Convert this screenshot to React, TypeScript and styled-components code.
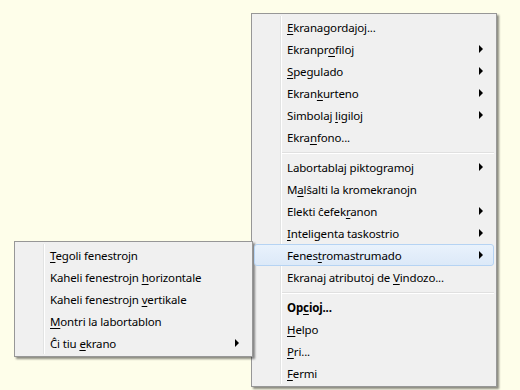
import styled, { createGlobalStyle } from 'styled-components';

const GlobalStyle = createGlobalStyle`
  html, body {
    margin: 0;
    padding: 0;
    background: #fefeea;
  }
  body {
    width: 520px;
    height: 390px;
    overflow: hidden;
    font-family: "Noto Sans", "Open Sans", sans-serif;
  }
`;

const Desktop = styled.div`
  position: relative;
  width: 520px;
  height: 390px;
  background: #fefeea;
`;

const Menu = styled.div<{ $left: number; $top: number; $width: number }>`
  position: absolute;
  left: ${({ $left }) => $left}px;
  top: ${({ $top }) => $top}px;
  width: ${({ $width }) => $width}px;
  box-sizing: border-box;
  padding: 2px;
  background: #f0f0f0;
  border: 1px solid #979797;
  box-shadow: 2px 2px 2px rgba(0, 0, 0, 0.45);
  display: flex;
  flex-direction: column;

  /* gutter line next to the icon column */
  &::before {
    content: "";
    position: absolute;
    top: 2px;
    bottom: 2px;
    left: 28px;
    width: 1px;
    background: #e2e3e3;
    box-shadow: 1px 0 0 #ffffff;
  }
`;

const Item = styled.div<{ $active?: boolean; $bold?: boolean }>`
  position: relative;
  height: 22px;
  box-sizing: border-box;
  display: flex;
  align-items: center;
  padding-left: 32px;
  padding-right: 10px;
  font-size: 11.5px;
  letter-spacing: -0.15px;
  color: #000;
  font-weight: ${({ $bold }) => ($bold ? 700 : 400)};
  white-space: nowrap;
  border: 1px solid ${({ $active }) => ($active ? '#b5d3f3' : 'transparent')};
  border-radius: 3px;
  background: ${({ $active }) =>
    $active ? 'linear-gradient(#e9f2fc, #dce9f8)' : 'transparent'};
  z-index: 1;

  u {
    text-decoration: underline;
    text-underline-offset: 2px;
  }
`;

const Label = styled.span`
  flex: 1;
`;

const Arrow = styled.span`
  width: 0;
  height: 0;
  border-top: 4px solid transparent;
  border-bottom: 4px solid transparent;
  border-left: 4px solid #000;
`;

const Separator = styled.div`
  height: 8px;
  display: flex;
  align-items: center;
  padding-left: 28px;
  z-index: 1;

  &::after {
    content: "";
    flex: 1;
    height: 1px;
    background: #e0e0e0;
    box-shadow: 0 1px 0 #ffffff;
  }
`;

type Entry = { label: React.ReactNode; sub?: boolean; active?: boolean; bold?: boolean } | 'sep';

const mainEntries: Entry[] = [
  { label: <><u>E</u>kranagordajoj...</> },
  { label: <>Ekranpr<u>o</u>filoj</>, sub: true },
  { label: <><u>S</u>pegulado</>, sub: true },
  { label: <>Ekran<u>k</u>urteno</>, sub: true },
  { label: <>Simbolaj <u>l</u>igiloj</>, sub: true },
  { label: <>Ekra<u>n</u>fono...</> },
  'sep',
  { label: <>Labortablaj pikto<u>g</u>ramoj</>, sub: true },
  { label: <>M<u>a</u>lŝalti la kromekranojn</> },
  { label: <>Elekti ĉefek<u>r</u>anon</>, sub: true },
  { label: <><u>I</u>nteligenta taskostrio</>, sub: true },
  { label: <>Fenes<u>t</u>romastrumado</>, sub: true, active: true },
  { label: <>Ekranaj atributoj de <u>V</u>indozo...</> },
  'sep',
  { label: <>Op<u>c</u>ioj...</>, bold: true },
  { label: <><u>H</u>elpo</> },
  { label: <><u>P</u>ri...</> },
  { label: <><u>F</u>ermi</> },
];

const subEntries: Entry[] = [
  { label: <><u>T</u>egoli fenestrojn</> },
  { label: <>Kaheli fenestrojn <u>h</u>orizontale</> },
  { label: <>Kaheli fenestrojn <u>v</u>ertikale</> },
  { label: <><u>M</u>ontri la labortablon</> },
  { label: <>Ĉi tiu <u>e</u>krano</>, sub: true },
];

const renderEntries = (entries: Entry[]) =>
  entries.map((e, i) =>
    e === 'sep' ? (
      <Separator key={i} />
    ) : (
      <Item key={i} $active={e.active} $bold={e.bold}>
        <Label>{e.label}</Label>
        {e.sub && <Arrow />}
      </Item>
    )
  );

const App = () => {
  return (
    <>
      <GlobalStyle />
      <Desktop>
        <Menu $left={251} $top={13} $width={246}>
          {renderEntries(mainEntries)}
        </Menu>
        <Menu $left={14} $top={241} $width={239}>
          {renderEntries(subEntries)}
        </Menu>
      </Desktop>
    </>
  );
};

export default App;
